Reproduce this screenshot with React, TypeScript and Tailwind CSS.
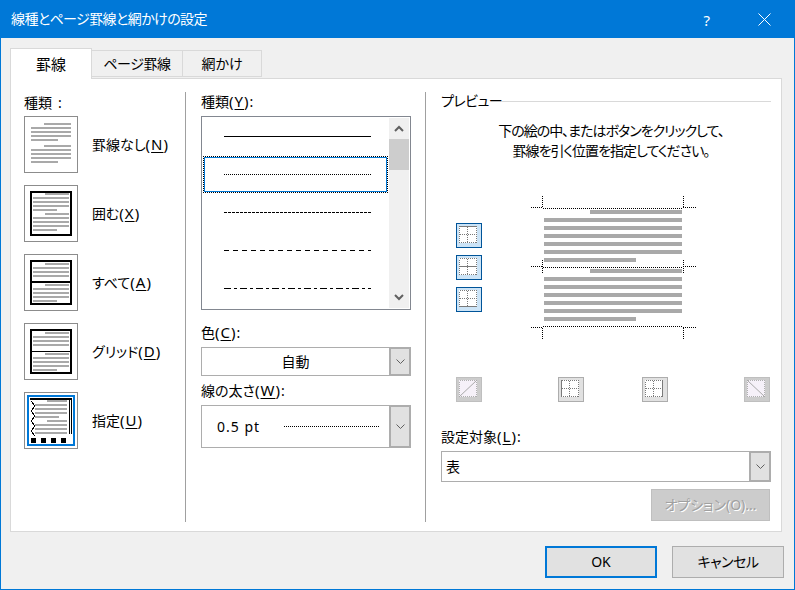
const Bars = ({ rows, x1 = 9, x2 = 45, xTop = 21, xShort = 33 }: { rows: number[]; x1?: number; x2?: number; xTop?: number; xShort?: number }) => (
  <>
    {rows.map((y, i) => {
      const top = i === 0 || i === 5;
      const short = i === 4 || i === 9;
      return <rect key={y} x={top ? xTop : x1} y={y} width={(short ? xShort : x2) - (top ? xTop : x1)} height={2} fill="#a9a9a9" />;
    })}
  </>
);

const rowsA = [7, 11, 15, 19, 23, 29, 33, 37, 41, 45];
const rowsB = [8, 12, 16, 20, 24, 28, 32, 36, 40, 44];

const NoneArt = () => <Bars rows={rowsA} x1={7} x2={47} xTop={20} xShort={34} />;

const BoxArt = () => (
  <>
    <rect x={7} y={7} width={40} height={43} fill="none" stroke="#000" strokeWidth={2} />
    <Bars rows={rowsB} />
  </>
);

const AllArt = ({ mid }: { mid: number }) => (
  <>
    <rect x={7} y={7} width={40} height={43} fill="none" stroke="#000" strokeWidth={2} />
    <Bars rows={[9, 13, 17, 21, 99, 30, 34, 38, 42, 46]} />
    <rect x={6} y={mid === 2 ? 27 : 28} width={42} height={mid} fill="#000" />
  </>
);

const CustomArt = () => (
  <>
    <rect x={4} y={4} width={46} height={49} fill="none" stroke="#0078d7" strokeWidth={2} />
    <rect x={6} y={6} width={42} height={2} fill="#000" />
    <rect x={45} y={6} width={1} height={36} fill="#000" />
    <rect x={47} y={6} width={1} height={36} fill="#000" />
    <polyline points="7,9 11,14 7,19 11,24 7,29 11,34 7,39 11,44" fill="none" stroke="#000" strokeWidth={1} />
    <Bars rows={[8, 12, 16, 20, 24, 28, 32, 36, 40, 99]} x1={11} x2={43} xTop={23} xShort={35} />
    {[7, 17, 27, 37].map(x => (
      <rect key={x} x={x} y={46} width={5} height={5} fill="#000" />
    ))}
  </>
);

const settingTypes = [
  { label: '罫線なし', key: 'N', art: <NoneArt /> },
  { label: '囲む', key: 'X', art: <BoxArt /> },
  { label: 'すべて', key: 'A', art: <AllArt mid={2} /> },
  { label: 'グリッド', key: 'D', art: <AllArt mid={1} /> },
  { label: '指定', key: 'U', art: <CustomArt /> },
];

const lineStyles = ['', '1 1', '3 1', '5 4', '7 3 3 3'];

const Key = ({ k }: { k: string }) => (
  <span className="text-[15px] leading-none tracking-[1px]">
    (<span className="underline underline-offset-2">{k}</span>)
  </span>
);

const Chevron = ({ up = false, big = false }: { up?: boolean; big?: boolean }) =>
  big ? (
    <svg width="10" height="7" viewBox="0 0 10 7">
      <polyline points={up ? '1,6 5,2 9,6' : '1,1 5,5 9,1'} fill="none" stroke="#606060" strokeWidth="2" />
    </svg>
  ) : (
    <svg width="9" height="5" viewBox="0 0 9 5">
      <polyline points="0.5,0.5 4.5,4.5 8.5,0.5" fill="none" stroke="#606060" strokeWidth="1" />
    </svg>
  );

const Combo = ({ className, children }: { className: string; children: React.ReactNode }) => (
  <div className={`flex border border-[#adadad] bg-white ${className}`}>
    <div className="flex min-w-0 flex-1 items-center">{children}</div>
    <div className="-my-px -mr-px flex w-[22px] items-center justify-center border-2 border-[#adadad] bg-[#e1e1e1]">
      <Chevron />
    </div>
  </div>
);

const GridGlyph = ({ line, color = '#7a7a7a' }: { line: 'top' | 'mid' | 'bottom' | 'left' | 'right'; color?: string }) => (
  <svg width="24" height="23" viewBox="0 0 24 23" shapeRendering="crispEdges">
    <rect x="2" y="2" width="18" height="17" fill="#fff" />
    <g fill="none" stroke={color} strokeDasharray="1 1">
      <path d="M2.5 2.5H19.5V18.5H2.5ZM10.5 2.5V18.5M2.5 10.5H19.5" />
    </g>
    {line === 'top' && <rect x="2" y="2" width="18" height="1" fill={color} />}
    {line === 'mid' && <rect x="2" y="10" width="18" height="1" fill={color} />}
    {line === 'bottom' && <rect x="2" y="18" width="18" height="1" fill={color} />}
    {line === 'left' && <rect x="2" y="2" width="1" height="17" fill={color} />}
    {line === 'right' && <rect x="19" y="2" width="1" height="17" fill={color} />}
  </svg>
);

const DiagGlyph = ({ rising }: { rising: boolean }) => (
  <svg width="24" height="23" viewBox="0 0 24 23">
    <rect x="2" y="2" width="18" height="17" fill="#f6f1f9" />
    <path d="M2.5 2.5H19.5V18.5H2.5Z" fill="none" stroke="#b0b0b0" strokeDasharray="1 1" shapeRendering="crispEdges" />
    <path d={rising ? 'M2 19L20 2' : 'M2 2L20 19'} stroke="#a8a8a8" strokeWidth="1" />
  </svg>
);

const SideButton = ({ line }: { line: 'top' | 'mid' | 'bottom' }) => (
  <div className="flex h-[25px] w-[26px] items-center justify-center border border-[#005499] bg-[#cce4f7]">
    <GridGlyph line={line} />
  </div>
);

const PreviewArt = () => {
  // origin of this drawing is (531,196) on the page
  const rows = [14, 22, 30, 38, 46, 54, 62];
  const dots = { fill: 'none', stroke: '#000', strokeDasharray: '1 1', shapeRendering: 'crispEdges' } as const;
  return (
    <svg width="165" height="144" viewBox="0 0 165 144" className="shrink-0">
      {[0, 59].map(dy =>
        rows.map((y, i) => (
          <rect key={`${dy}-${y}`} x={i === 0 ? 59 : 13} y={y + dy} width={i === 0 || i === 6 ? 92 : 138} height={4} fill="#a9a9a9" />
        )),
      )}
      <path d="M0 11.5H11M12 12.5H152M152 11.5H165M11.5 0V11M152.5 0V11" {...dots} />
      <path d="M0 70.5H11M12 71.5H152M152 70.5H165M11.5 64V78M152.5 64V78" {...dots} />
      <path d="M0 131.5H11M12 130.5H152M152 131.5H165M11.5 132V144M152.5 132V144" {...dots} />
    </svg>
  );
};

export default function App() {
  return (
    <div className="flex h-[590px] w-[795px] flex-col overflow-hidden border border-[#0078d7] bg-[#f0f0f0] font-['Noto_Sans','Noto_Sans_CJK_JP',sans-serif] text-[14px] leading-[20px] text-black [font-feature-settings:'palt']">
      <div className="flex h-[37px] shrink-0 items-center bg-[#0078d7] pl-[10px] pr-[23px] text-white">
        <span className="mb-px flex-1 tracking-[-0.6px]">線種とページ罫線と網かけの設定</span>
        <span className="mr-[48px] text-[15px]">?</span>
        <svg width="13" height="13" viewBox="0 0 13 13">
          <path d="M0.5 0.5L12.5 12.5M12.5 0.5L0.5 12.5" stroke="#fff" strokeWidth="1" />
        </svg>
      </div>

      <div className="ml-[9px] mt-[10px] flex h-[31px] shrink-0 items-start">
        <div className="relative z-10 flex h-[31px] w-[82px] items-center justify-center border border-b-0 border-[#d9d9d9] bg-white pb-px text-[15px]">罫線</div>
        <div className="mt-[2px] flex h-[27px] w-[91px] items-center justify-center border border-l-0 border-[#d9d9d9] bg-[#f0f0f0] tracking-[-0.4px]">ページ罫線</div>
        <div className="mt-[2px] flex h-[27px] w-[79px] items-center justify-center border border-l-0 border-[#d9d9d9] bg-[#f0f0f0]">網かけ</div>
      </div>

      <div className="-mt-px ml-[9px] flex h-[454px] w-[772px] shrink-0 border border-[#d9d9d9] bg-white pb-[9px] pt-[13px]">
        <div className="w-[174px] shrink-0 pl-[13px]">
          <div className="h-[24px] leading-[22px]">
            種類<span className="ml-[6px]">:</span>
          </div>
          <div className="flex flex-col gap-[12px]">
            {settingTypes.map(item => (
              <div key={item.key} className="flex items-center">
                <div className="h-[57px] w-[54px] shrink-0 border border-[#8c8c8c]">
                  <svg width="52" height="55" viewBox="1 1 52 55" shapeRendering="crispEdges">
                    {item.art}
                  </svg>
                </div>
                <span className="ml-[14px]">
                  {item.label}
                  <Key k={item.key} />
                </span>
              </div>
            ))}
          </div>
        </div>

        <div className="w-[240px] shrink-0 border-l border-[#a0a0a0] pl-[15px] pr-[14px]">
          <div className="h-[24px] leading-[20px]">
            種類
            <Key k="Y" />:
          </div>
          <div className="flex h-[194px] border border-[#828790]">
            <div className="flex-1">
              {lineStyles.map((dash, i) =>
                i === 1 ? (
                  <div key={i} className="h-[38px] pl-[2px] pt-[2px]">
                    <div className="flex h-[35px] w-[183px] items-center border border-[#0078d7] pl-[19px] outline outline-1 outline-dotted outline-black">
                      <svg width="147" height="1" className="block">
                        <line x1="0" y1="0.5" x2="147" y2="0.5" stroke="#000" strokeDasharray={dash} />
                      </svg>
                    </div>
                  </div>
                ) : (
                  <div key={i} className="flex h-[38px] items-center pl-[22px]">
                    <svg width="147" height="1" className="block">
                      <line x1="0" y1="0.5" x2="147" y2="0.5" stroke="#000" strokeDasharray={dash} />
                    </svg>
                  </div>
                ),
              )}
            </div>
            <div className="my-px mr-px flex w-[20px] flex-col bg-[#f0f0f0]">
              <div className="flex h-[21px] items-center justify-center">
                <Chevron up big />
              </div>
              <div className="h-[31px] bg-[#cdcdcd]" />
              <div className="flex-1" />
              <div className="flex h-[21px] items-center justify-center">
                <Chevron big />
              </div>
            </div>
          </div>

          <div className="mb-[4px] mt-[13px] h-[20px]">
            色<Key k="C" />:
          </div>
          <Combo className="h-[29px]">
            <span className="w-full text-center">自動</span>
          </Combo>

          <div className="mb-[4px] mt-[5px] h-[20px]">
            線の太さ
            <Key k="W" />:
          </div>
          <Combo className="h-[43px]">
            <span className="ml-[15px] w-[67px] tracking-[1px]">0.5 pt</span>
            <svg width="95" height="1" className="block">
              <line x1="0" y1="0.5" x2="95" y2="0.5" stroke="#000" strokeDasharray="1 1" />
            </svg>
          </Combo>
        </div>

        <div className="flex w-[356px] shrink-0 flex-col border-l border-[#a0a0a0] pl-[15px] pr-[10px]">
          <div className="flex h-[18px] items-center">
            <span className="w-[60px] whitespace-nowrap tracking-[-0.5px]">プレビュー</span>
            <div className="h-px flex-1 bg-[#d9d9d9]" />
          </div>
          <div className="mt-[11px] pl-[10px] text-center tracking-[-1px]">
            <div>下の絵の中、またはボタンをクリックして、</div>
            <div>罫線を引く位置を指定してください。</div>
          </div>

          <div className="mt-[35px] flex items-start pl-[15px]">
            <div className="mt-[27px] flex flex-col gap-[7px]">
              <SideButton line="top" />
              <SideButton line="mid" />
              <SideButton line="bottom" />
            </div>
            <div className="ml-[49px]">
              <PreviewArt />
            </div>
          </div>

          <div className="ml-[15px] mt-[37px] flex">
            <div className="flex h-[25px] w-[26px] items-center justify-center border border-[#bfbfbf] bg-[#cccccc]">
              <DiagGlyph rising />
            </div>
            <div className="ml-[76px] flex h-[25px] w-[26px] items-center justify-center border border-[#adadad] bg-[#e1e1e1]">
              <GridGlyph line="left" />
            </div>
            <div className="ml-[58px] flex h-[25px] w-[26px] items-center justify-center border border-[#adadad] bg-[#e1e1e1]">
              <GridGlyph line="right" />
            </div>
            <div className="ml-[76px] flex h-[25px] w-[26px] items-center justify-center border border-[#bfbfbf] bg-[#cccccc]">
              <DiagGlyph rising={false} />
            </div>
          </div>

          <div className="mb-[4px] mt-[25px] h-[20px]">
            設定対象
            <Key k="L" />:
          </div>
          <Combo className="h-[31px]">
            <span className="pl-[4px]">表</span>
          </Combo>
          <div className="mr-px mt-[7px] flex h-[32px] w-[119px] items-center justify-center self-end border border-[#bfbfbf] bg-[#cccccc] text-[#a0a0a0] [text-shadow:1px_1px_0_#fff]">
            オプション(O)...
          </div>
        </div>
      </div>

      <div className="mt-[14px] flex justify-end gap-[15px] pr-[10px]">
        <div className="flex h-[32px] w-[112px] items-center justify-center border-2 border-[#0078d7] bg-[#e1e1e1]">OK</div>
        <div className="flex h-[32px] w-[112px] items-center justify-center border border-[#adadad] bg-[#e1e1e1] tracking-[-0.5px]">キャンセル</div>
      </div>
    </div>
  );
}
